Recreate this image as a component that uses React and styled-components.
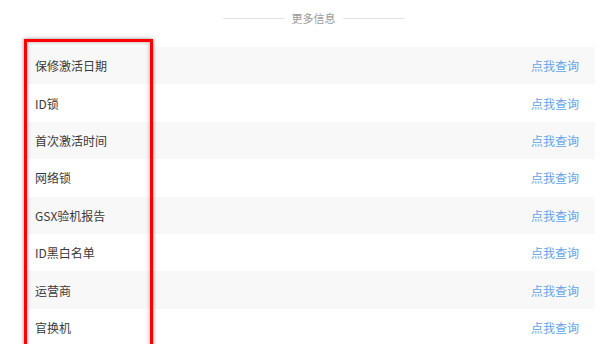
import styled, { createGlobalStyle } from "styled-components";

const GlobalStyle = createGlobalStyle`
    body {
        margin: 0;
        background: #ffffff;
        font-family: "Microsoft YaHei", "Noto Sans CJK SC", sans-serif;
    }
`

const items = [
    "保修激活日期",
    "ID锁",
    "首次激活时间",
    "网络锁",
    "GSX验机报告",
    "ID黑白名单",
    "运营商",
    "官换机",
]

function App() {
    return (
        <>
            <GlobalStyle />
            <Page>
                <Header>
                    <Line />
                    <Title>更多信息</Title>
                    <Line />
                </Header>
                <List>
                    {items.map((name, i) => (
                        <Row key={name} striped={i % 2 === 0}>
                            <Name>{name}</Name>
                            <Query>点我查询</Query>
                        </Row>
                    ))}
                </List>
                <Highlight />
            </Page>
        </>
    )
}

const Page = styled.div`
    position: relative;
    width: 600px;
    height: 344px;
    overflow: hidden;
    padding-top: 10px;
    box-sizing: border-box;
`
const Header = styled.div`
    display: flex;
    align-items: center;
    justify-content: center;
    gap: 7px;
    height: 16px;
    margin-bottom: 21px;
    padding-left: 27px;
`
const Line = styled.div`
    width: 62px;
    height: 1px;
    background: #e2e2e2;
`
const Title = styled.span`
    font-size: 11px;
    color: #9a9a9a;
    line-height: 16px;
`
const List = styled.div`
    display: flex;
    flex-direction: column;
    margin: 0 5px 0 24px;
`
const Row = styled.div`
    display: flex;
    align-items: center;
    justify-content: space-between;
    height: 37.4px;
    padding: 0 16px 0 11px;
    background: ${props => props.striped ? "#f8f8f8" : "#ffffff"};
`
const Name = styled.span`
    font-size: 12px;
    color: #3a3a3a;
`
const Query = styled.span`
    font-size: 12px;
    color: #62a4ea;
`
const Highlight = styled.div`
    position: absolute;
    left: 24px;
    top: 39px;
    width: 123px;
    height: 340px;
    border: 3px solid #ff0000;
    box-shadow: 0 0 4px rgba(0, 0, 0, 0.45), inset 0 0 4px rgba(0, 0, 0, 0.35);
`

export default App;
